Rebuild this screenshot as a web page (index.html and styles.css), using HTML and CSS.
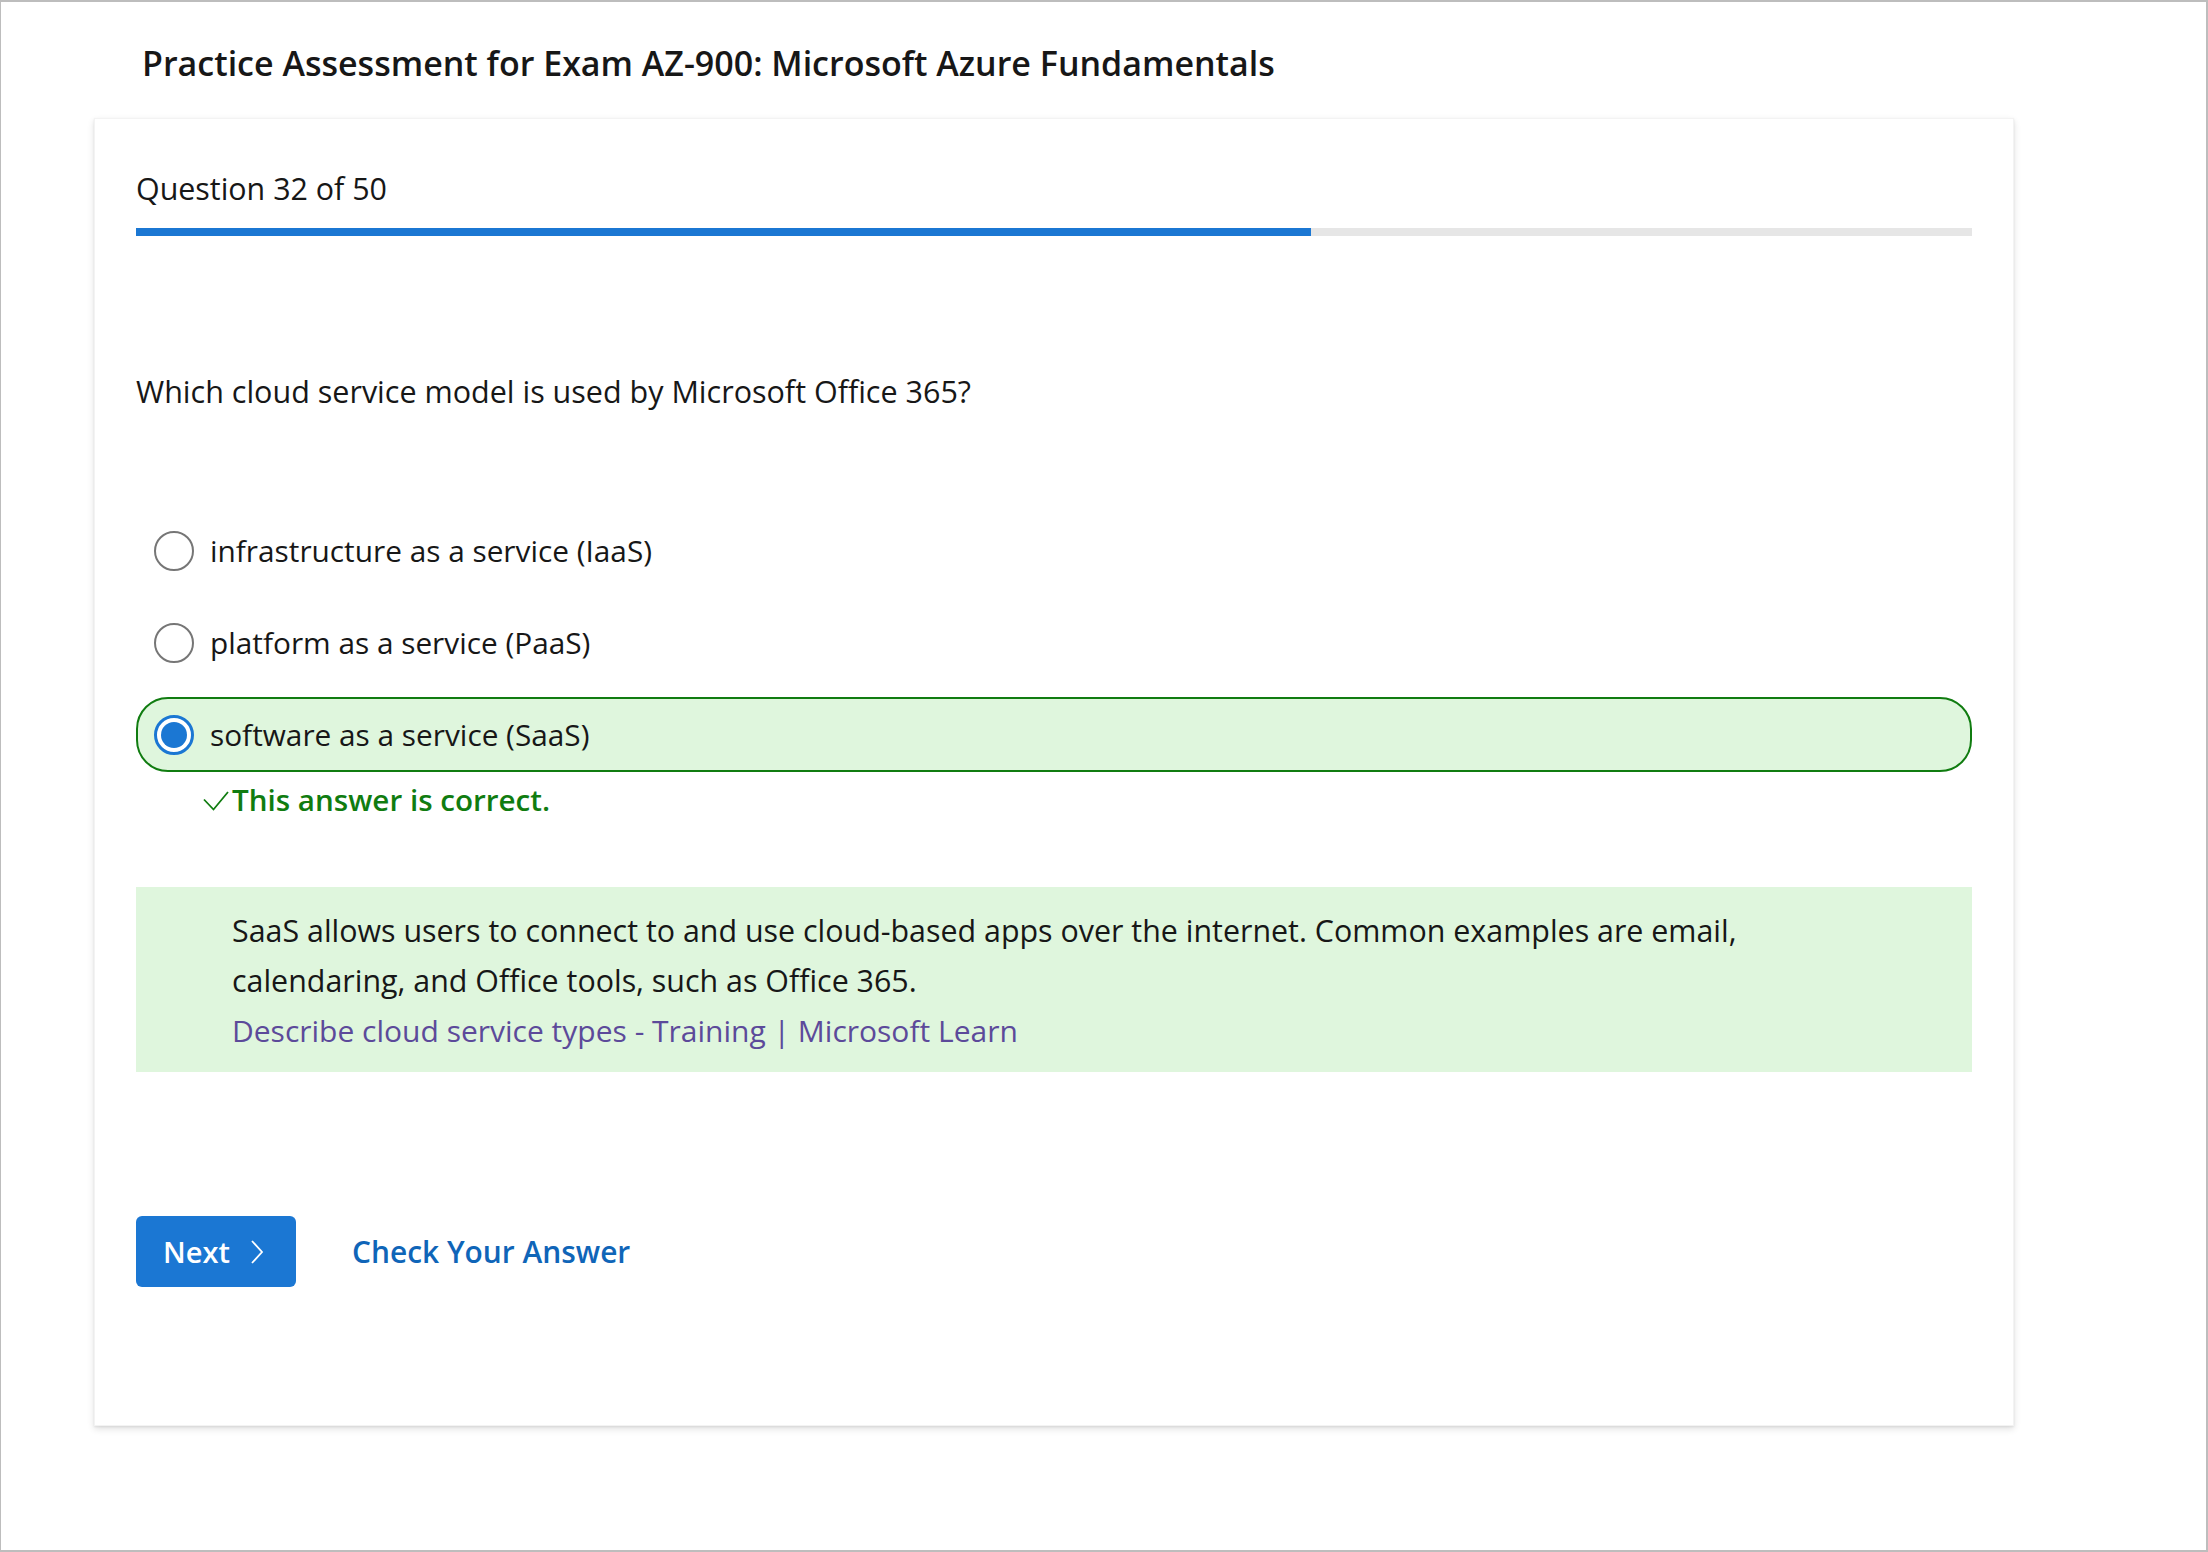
FILE: index.html
```html
<!DOCTYPE html>
<html lang="en">
<head>
<meta charset="utf-8">
<title>Practice Assessment</title>
<link rel="stylesheet" href="styles.css">
</head>
<body>
<div class="frame">
  <h1 class="title">Practice Assessment for Exam AZ-900: Microsoft Azure Fundamentals</h1>
  <section class="card">
    <div class="counter">Question 32 of 50</div>
    <div class="progress"><div class="progress-fill" style="width:64%"></div></div>
    <p class="question">Which cloud service model is used by Microsoft Office 365?</p>
    <div class="options">
      <div class="option">
        <span class="radio"></span>
        <span class="option-text">infrastructure as a service (IaaS)</span>
      </div>
      <div class="option">
        <span class="radio"></span>
        <span class="option-text">platform as a service (PaaS)</span>
      </div>
      <div class="option option-correct">
        <span class="radio radio-checked"><span class="radio-dot"></span></span>
        <span class="option-text">software as a service (SaaS)</span>
      </div>
    </div>
    <div class="feedback">
      <svg class="check" width="26" height="20" viewBox="0 0 26 20"><polyline points="1,8.5 10.5,18.5 25,1" fill="none" stroke="#107c10" stroke-width="1.8"/></svg>
      <span>This answer is correct.</span>
    </div>
    <div class="explanation">
      <p class="explanation-text">SaaS allows users to connect to and use cloud-based apps over the internet. Common examples are email, calendaring, and Office tools, such as Office 365.</p>
      <a class="explanation-link" href="#">Describe cloud service types - Training | Microsoft Learn</a>
    </div>
    <div class="actions">
      <button class="btn-next">Next
        <svg class="chev" width="14" height="24" viewBox="0 0 14 24"><polyline points="2,1 12,12 2,23" fill="none" stroke="#fff" stroke-width="1.8"/></svg>
      </button>
      <a class="check-link" href="#">Check Your Answer</a>
    </div>
  </section>
</div>
</body>
</html>
```
FILE: styles.css
```css
* { box-sizing: border-box; }
html, body { margin: 0; padding: 0; background: #fff; }
body {
  font-family: "Open Sans", "Noto Sans", "Liberation Sans", sans-serif;
  color: #171717;
}
.frame {
  width: 2208px;
  height: 1552px;
  border-top: 2px solid #bdbdbd;
  border-left: 1px solid #bdbdbd;
  border-right: 2px solid #bdbdbd;
  border-bottom: 2px solid #bdbdbd;
  padding-left: 93px;
  overflow: hidden;
}
.title {
  margin: 41px 0 0 48px;
  font-size: 34px;
  font-weight: 600;
  line-height: 40px;
  letter-spacing: 0;
}
.card {
  margin-top: 35px;
  width: 1920px;
  background: #fff;
  border: 1px solid #f3f3f3;
  box-shadow: 0 3px 7px rgba(0,0,0,0.12), 0 1px 2px rgba(0,0,0,0.08);
  padding: 50px 41px 138px 41px;
}
.counter {
  font-size: 30.4px;
  line-height: 40px;
}
.progress {
  margin-top: 19px;
  height: 8px;
  background: #e6e6e6;
}
.progress-fill {
  height: 100%;
  background: #1b77d3;
}
.question {
  margin: 135px 0 0 0;
  font-size: 30.5px;
  line-height: 40px;
}
.options {
  margin-top: 102px;
  display: flex;
  flex-direction: column;
  gap: 17px;
}
.option {
  height: 75px;
  display: flex;
  align-items: center;
  border: 2px solid transparent;
  border-radius: 32px;
  padding-left: 16px;
}
.option-correct {
  border-color: #107c10;
  background: #dff6dd;
}
.radio {
  width: 40px;
  height: 40px;
  border-radius: 50%;
  border: 2px solid #767676;
  background: #fff;
  flex: none;
  display: flex;
  align-items: center;
  justify-content: center;
}
.radio-checked {
  border: 3px solid #1b77d3;
}
.radio-dot {
  width: 26px;
  height: 26px;
  border-radius: 50%;
  background: #1b77d3;
}
.option-text {
  margin-left: 16px;
  font-size: 29.8px;
  line-height: 40px;
}
.feedback {
  margin-top: 8px;
  padding-left: 67px;
  display: flex;
  align-items: center;
  gap: 3px;
  color: #107c10;
  font-weight: 600;
  font-size: 29.6px;
  line-height: 40px;
}
.check { flex: none; margin-top: 2px; }
.explanation {
  margin-top: 67px;
  background: #dff6dd;
  padding: 19px 120px 16px 96px;
  font-size: 30.4px;
  line-height: 50px;
}
.explanation-text { margin: 0; }
.explanation-link {
  color: #5c4a9a;
  text-decoration: none;
  font-size: 30px;
}
.actions {
  margin-top: 144px;
  display: flex;
  align-items: center;
  gap: 56px;
}
.btn-next {
  height: 71px;
  width: 160px;
  border: none;
  border-radius: 6px;
  background: #1b77d3;
  color: #fff;
  font-family: inherit;
  font-size: 29px;
  font-weight: 600;
  padding: 0 0 0 27px;
  display: flex;
  align-items: center;
  gap: 20px;
}
.chev { flex: none; }
.check-link {
  color: #0f65b8;
  font-size: 29.9px;
  font-weight: 600;
  text-decoration: none;
}
```
